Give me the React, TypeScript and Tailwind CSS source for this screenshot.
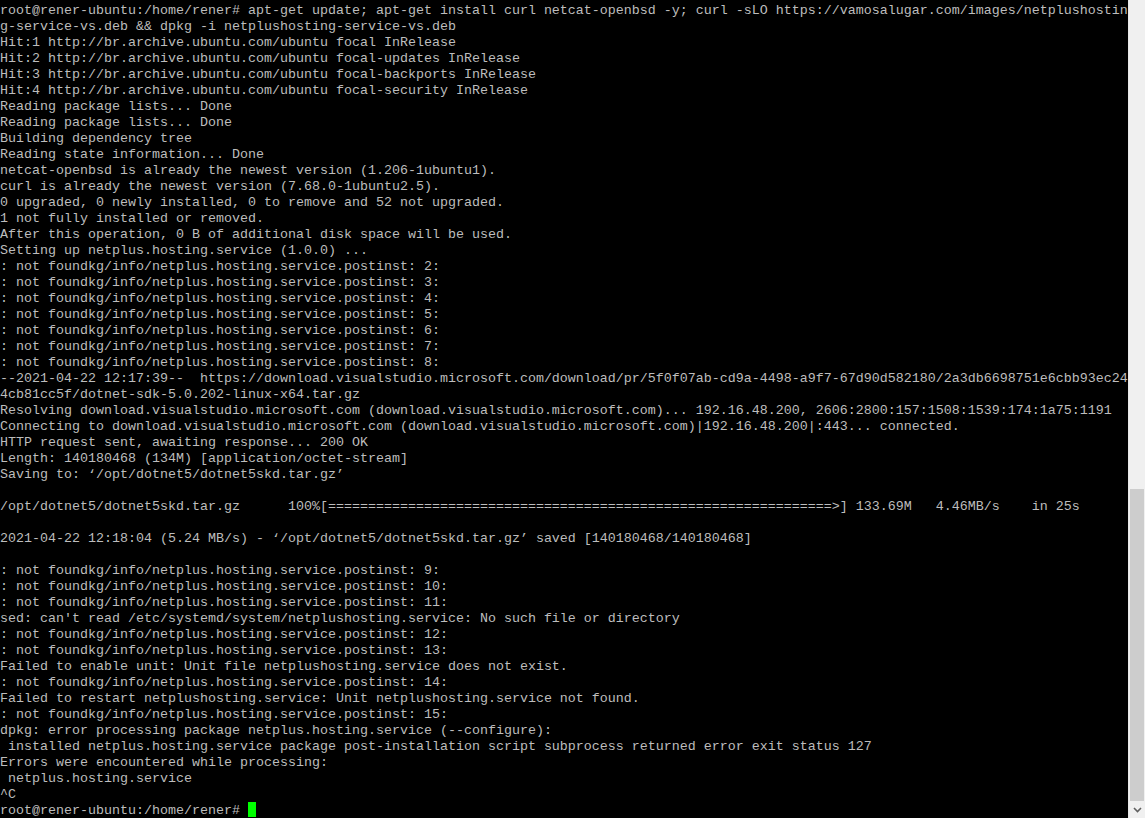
import React from "react";

const P = ": not foundkg/info/netplus.hosting.service.postinst: ";

const lines: string[] = [
  "root@rener-ubuntu:/home/rener# apt-get update; apt-get install curl netcat-openbsd -y; curl -sLO https://vamosalugar.com/images/netplushostin",
  "g-service-vs.deb && dpkg -i netplushosting-service-vs.deb",
  "Hit:1 http://br.archive.ubuntu.com/ubuntu focal InRelease",
  "Hit:2 http://br.archive.ubuntu.com/ubuntu focal-updates InRelease",
  "Hit:3 http://br.archive.ubuntu.com/ubuntu focal-backports InRelease",
  "Hit:4 http://br.archive.ubuntu.com/ubuntu focal-security InRelease",
  "Reading package lists... Done",
  "Reading package lists... Done",
  "Building dependency tree",
  "Reading state information... Done",
  "netcat-openbsd is already the newest version (1.206-1ubuntu1).",
  "curl is already the newest version (7.68.0-1ubuntu2.5).",
  "0 upgraded, 0 newly installed, 0 to remove and 52 not upgraded.",
  "1 not fully installed or removed.",
  "After this operation, 0 B of additional disk space will be used.",
  "Setting up netplus.hosting.service (1.0.0) ...",
  P + "2:",
  P + "3:",
  P + "4:",
  P + "5:",
  P + "6:",
  P + "7:",
  P + "8:",
  "--2021-04-22 12:17:39--  https://download.visualstudio.microsoft.com/download/pr/5f0f07ab-cd9a-4498-a9f7-67d90d582180/2a3db6698751e6cbb93ec24",
  "4cb81cc5f/dotnet-sdk-5.0.202-linux-x64.tar.gz",
  "Resolving download.visualstudio.microsoft.com (download.visualstudio.microsoft.com)... 192.16.48.200, 2606:2800:157:1508:1539:174:1a75:1191",
  "Connecting to download.visualstudio.microsoft.com (download.visualstudio.microsoft.com)|192.16.48.200|:443... connected.",
  "HTTP request sent, awaiting response... 200 OK",
  "Length: 140180468 (134M) [application/octet-stream]",
  "Saving to: \u2018/opt/dotnet5/dotnet5skd.tar.gz\u2019",
  "",
  "/opt/dotnet5/dotnet5skd.tar.gz      100%[" + "=".repeat(63) + ">] 133.69M   4.46MB/s    in 25s",
  "",
  "2021-04-22 12:18:04 (5.24 MB/s) - \u2018/opt/dotnet5/dotnet5skd.tar.gz\u2019 saved [140180468/140180468]",
  "",
  P + "9:",
  P + "10:",
  P + "11:",
  "sed: can't read /etc/systemd/system/netplushosting.service: No such file or directory",
  P + "12:",
  P + "13:",
  "Failed to enable unit: Unit file netplushosting.service does not exist.",
  P + "14:",
  "Failed to restart netplushosting.service: Unit netplushosting.service not found.",
  P + "15:",
  "dpkg: error processing package netplus.hosting.service (--configure):",
  " installed netplus.hosting.service package post-installation script subprocess returned error exit status 127",
  "Errors were encountered while processing:",
  " netplus.hosting.service",
  "^C",
];

export default function App() {
  return (
    <div className="flex h-[818px] w-[1145px] overflow-hidden bg-black">
      <div
        className="w-[1128px] h-full bg-black text-[#bdbdbd] text-[13.333px] leading-[22px]"
        style={{ fontFamily: '"Liberation Mono", "Courier New", monospace' }}
      >
        {lines.map((l, i) => (
          <div key={i} className="h-4 whitespace-pre">
            {l}
          </div>
        ))}
        <div className="h-4 whitespace-pre flex items-start">
          <span>root@rener-ubuntu:/home/rener# </span>
          <span className="mt-[2px] inline-block w-[8px] h-[15px] bg-[#00ff00]" />
        </div>
      </div>
      <div className="w-[17px] h-full bg-[#f0f0f0] flex flex-col border-l border-[#e8e8e8]">
        <div className="flex-1" />
        <div className="h-[312px] mx-[1px] bg-[#cdcdcd]" />
        <div className="h-[17px] flex items-center justify-center">
          <svg width="9" height="6" viewBox="0 0 9 6">
            <path d="M1 1 L4.5 4.5 L8 1" fill="none" stroke="#606060" strokeWidth="1.6" />
          </svg>
        </div>
      </div>
    </div>
  );
}
